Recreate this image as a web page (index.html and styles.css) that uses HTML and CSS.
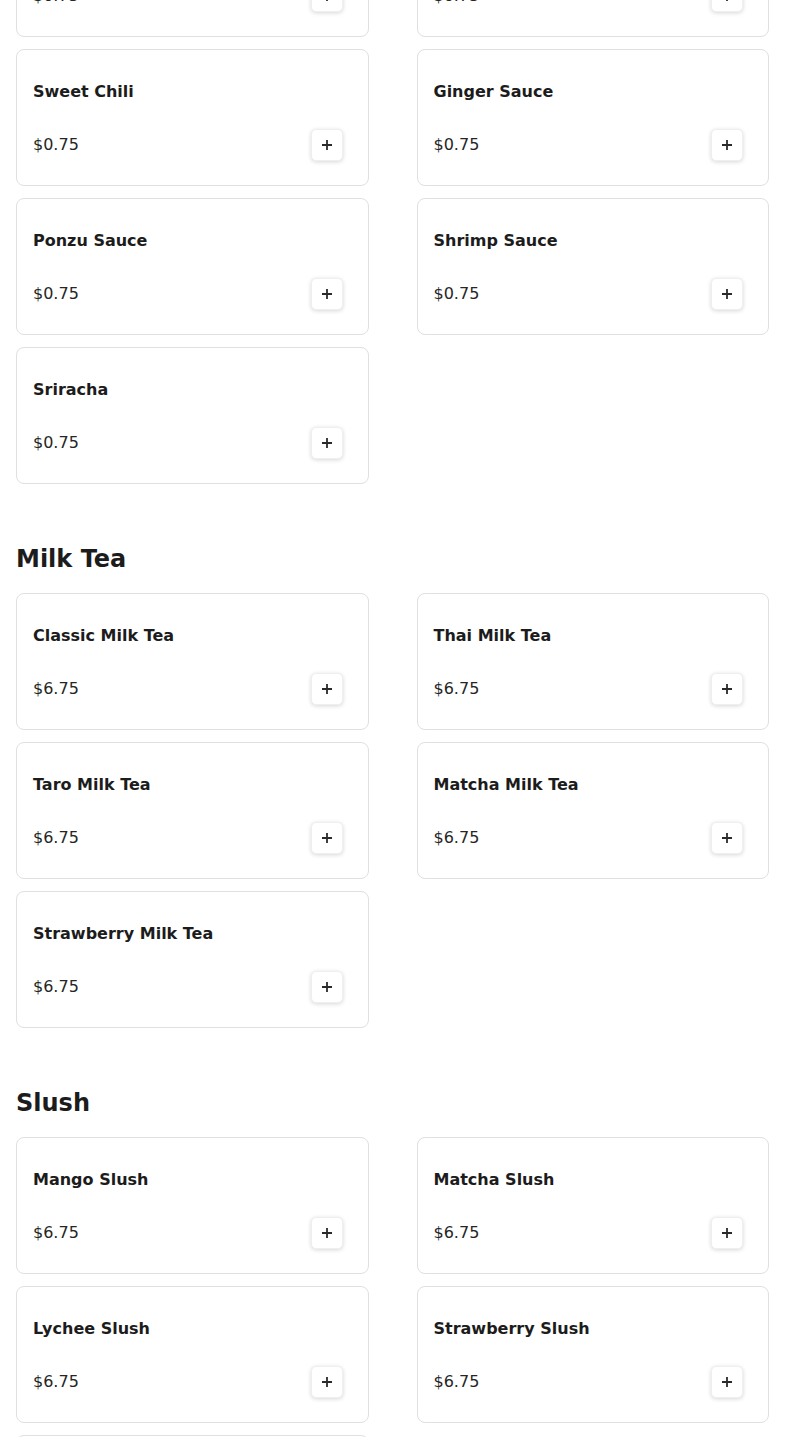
FILE: index.html
```html
<!DOCTYPE html>
<html lang="en">
<head>
<meta charset="utf-8">
<title>Menu</title>
<link rel="stylesheet" href="styles.css">
</head>
<body>
<main class="menu">
  <section class="section section-first">
    <div class="grid">
      <div class="card"><h3 class="item-name">Spicy Mayo</h3><div class="item-row"><span class="price">$0.75</span><button class="add" type="button" aria-label="Add"><svg class="plus" viewBox="0 0 10 10"><path d="M5 0v10M0 5h10"/></svg></button></div></div>
      <div class="card"><h3 class="item-name">Eel Sauce</h3><div class="item-row"><span class="price">$0.75</span><button class="add" type="button" aria-label="Add"><svg class="plus" viewBox="0 0 10 10"><path d="M5 0v10M0 5h10"/></svg></button></div></div>
      <div class="card"><h3 class="item-name">Sweet Chili</h3><div class="item-row"><span class="price">$0.75</span><button class="add" type="button" aria-label="Add"><svg class="plus" viewBox="0 0 10 10"><path d="M5 0v10M0 5h10"/></svg></button></div></div>
      <div class="card"><h3 class="item-name">Ginger Sauce</h3><div class="item-row"><span class="price">$0.75</span><button class="add" type="button" aria-label="Add"><svg class="plus" viewBox="0 0 10 10"><path d="M5 0v10M0 5h10"/></svg></button></div></div>
      <div class="card"><h3 class="item-name">Ponzu Sauce</h3><div class="item-row"><span class="price">$0.75</span><button class="add" type="button" aria-label="Add"><svg class="plus" viewBox="0 0 10 10"><path d="M5 0v10M0 5h10"/></svg></button></div></div>
      <div class="card"><h3 class="item-name">Shrimp Sauce</h3><div class="item-row"><span class="price">$0.75</span><button class="add" type="button" aria-label="Add"><svg class="plus" viewBox="0 0 10 10"><path d="M5 0v10M0 5h10"/></svg></button></div></div>
      <div class="card"><h3 class="item-name">Sriracha</h3><div class="item-row"><span class="price">$0.75</span><button class="add" type="button" aria-label="Add"><svg class="plus" viewBox="0 0 10 10"><path d="M5 0v10M0 5h10"/></svg></button></div></div>
    </div>
  </section>
  <section class="section">
    <h2 class="section-title">Milk Tea</h2>
    <div class="grid">
      <div class="card"><h3 class="item-name">Classic Milk Tea</h3><div class="item-row"><span class="price">$6.75</span><button class="add" type="button" aria-label="Add"><svg class="plus" viewBox="0 0 10 10"><path d="M5 0v10M0 5h10"/></svg></button></div></div>
      <div class="card"><h3 class="item-name">Thai Milk Tea</h3><div class="item-row"><span class="price">$6.75</span><button class="add" type="button" aria-label="Add"><svg class="plus" viewBox="0 0 10 10"><path d="M5 0v10M0 5h10"/></svg></button></div></div>
      <div class="card"><h3 class="item-name">Taro Milk Tea</h3><div class="item-row"><span class="price">$6.75</span><button class="add" type="button" aria-label="Add"><svg class="plus" viewBox="0 0 10 10"><path d="M5 0v10M0 5h10"/></svg></button></div></div>
      <div class="card"><h3 class="item-name">Matcha Milk Tea</h3><div class="item-row"><span class="price">$6.75</span><button class="add" type="button" aria-label="Add"><svg class="plus" viewBox="0 0 10 10"><path d="M5 0v10M0 5h10"/></svg></button></div></div>
      <div class="card"><h3 class="item-name">Strawberry Milk Tea</h3><div class="item-row"><span class="price">$6.75</span><button class="add" type="button" aria-label="Add"><svg class="plus" viewBox="0 0 10 10"><path d="M5 0v10M0 5h10"/></svg></button></div></div>
    </div>
  </section>
  <section class="section">
    <h2 class="section-title">Slush</h2>
    <div class="grid">
      <div class="card"><h3 class="item-name">Mango Slush</h3><div class="item-row"><span class="price">$6.75</span><button class="add" type="button" aria-label="Add"><svg class="plus" viewBox="0 0 10 10"><path d="M5 0v10M0 5h10"/></svg></button></div></div>
      <div class="card"><h3 class="item-name">Matcha Slush</h3><div class="item-row"><span class="price">$6.75</span><button class="add" type="button" aria-label="Add"><svg class="plus" viewBox="0 0 10 10"><path d="M5 0v10M0 5h10"/></svg></button></div></div>
      <div class="card"><h3 class="item-name">Lychee Slush</h3><div class="item-row"><span class="price">$6.75</span><button class="add" type="button" aria-label="Add"><svg class="plus" viewBox="0 0 10 10"><path d="M5 0v10M0 5h10"/></svg></button></div></div>
      <div class="card"><h3 class="item-name">Strawberry Slush</h3><div class="item-row"><span class="price">$6.75</span><button class="add" type="button" aria-label="Add"><svg class="plus" viewBox="0 0 10 10"><path d="M5 0v10M0 5h10"/></svg></button></div></div>
      <div class="card"><h3 class="item-name">Taro Slush</h3><div class="item-row"><span class="price">$6.75</span><button class="add" type="button" aria-label="Add"><svg class="plus" viewBox="0 0 10 10"><path d="M5 0v10M0 5h10"/></svg></button></div></div>
    </div>
  </section>
</main>
</body>
</html>
```

FILE: styles.css
```css
html, body {
  margin: 0;
  padding: 0;
  background: #ffffff;
}

body {
  font-family: "DejaVu Sans", "Noto Sans", sans-serif;
  color: #222222;
  overflow: hidden;
}

.menu {
  padding: 0 16px;
  margin-top: -100px;
}

.section-title {
  margin: 59px 0 18px;
  font-size: 24px;
  line-height: 32px;
  font-weight: bold;
  color: #1c1c1c;
}

.grid {
  display: grid;
  grid-template-columns: 1fr 1fr;
  column-gap: 48px;
  row-gap: 12px;
}

.card {
  border: 1px solid #e0e0e0;
  border-radius: 8px;
  background: #ffffff;
  padding: 30px 25px 24px 16px;
  display: flex;
  flex-direction: column;
  gap: 25px;
}

.item-name {
  margin: 0;
  font-size: 16px;
  line-height: 24px;
  font-weight: bold;
  color: #1c1c1c;
}

.item-row {
  display: flex;
  align-items: center;
  justify-content: space-between;
  height: 32px;
}

.price {
  font-size: 16px;
  line-height: 24px;
  color: #262626;
}

.add {
  width: 32px;
  height: 32px;
  padding: 0;
  border: 1px solid #efefef;
  border-radius: 5px;
  background: #ffffff;
  box-shadow: 0 1px 4px rgba(0, 0, 0, 0.16);
  display: flex;
  align-items: center;
  justify-content: center;
}

.plus {
  width: 10px;
  height: 10px;
  fill: none;
  stroke: #2a2a2a;
  stroke-width: 1.8;
}
```
